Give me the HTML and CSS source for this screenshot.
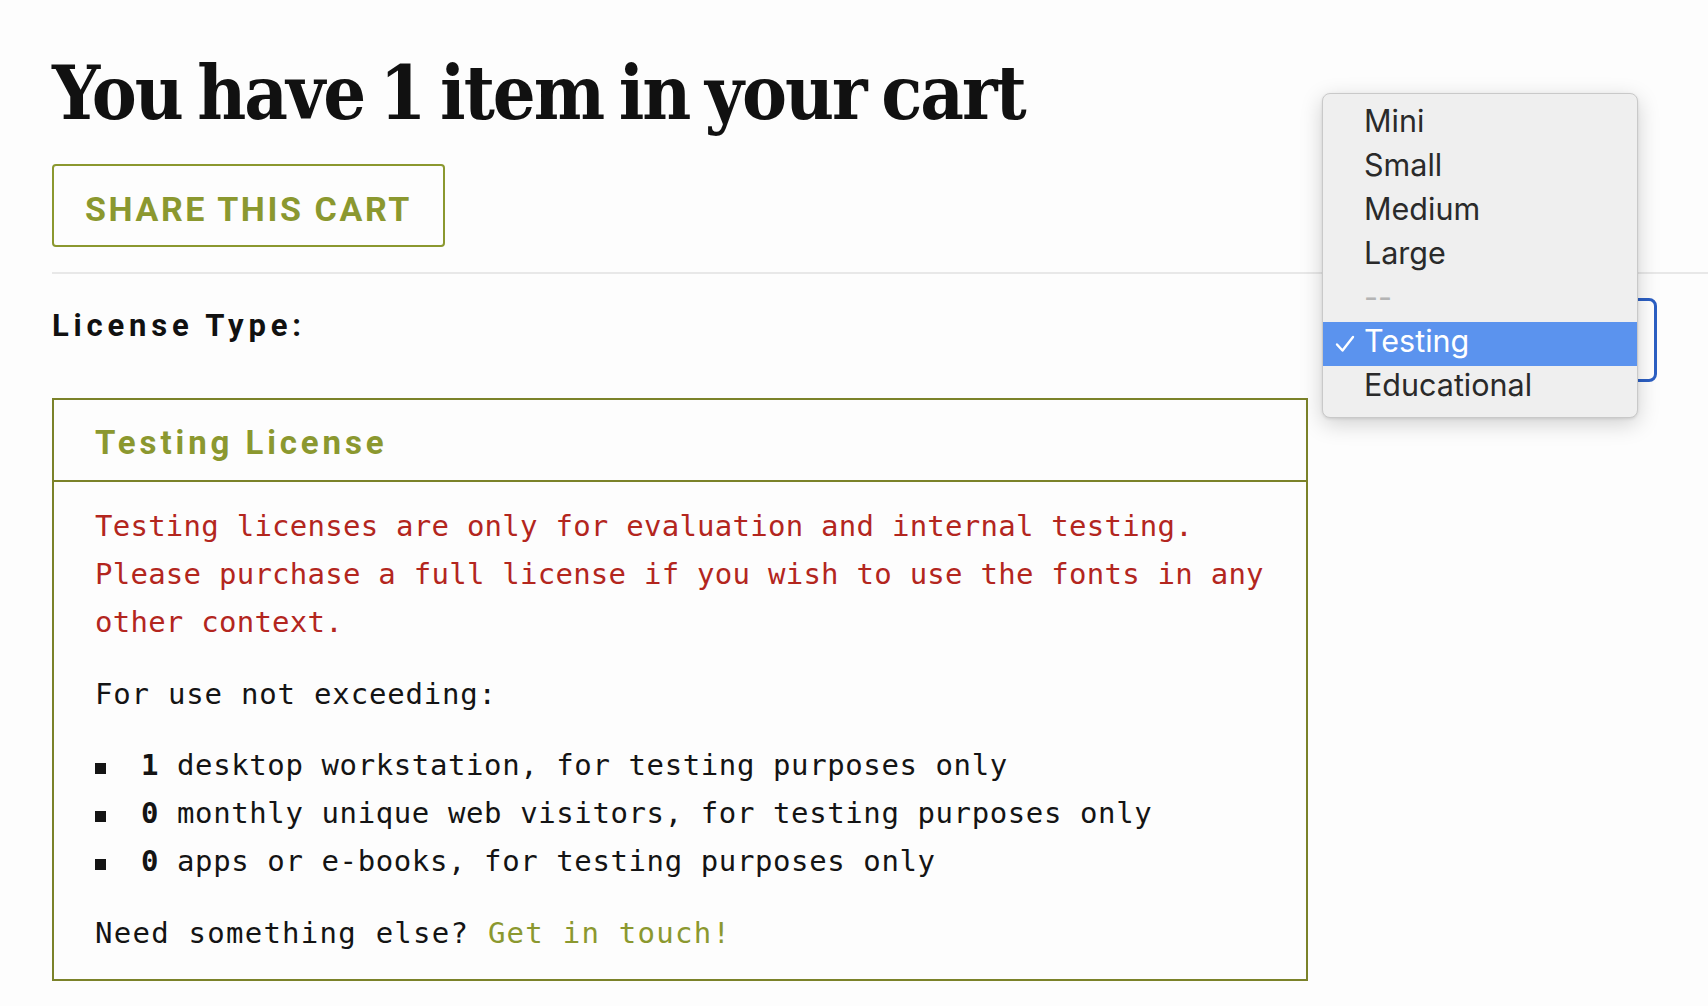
FILE: index.html
```html
<!DOCTYPE html>
<html lang="en">
<head>
<meta charset="utf-8">
<title>Cart</title>
<link rel="stylesheet" href="styles.css">
</head>
<body>
<main class="page">
  <h1 class="title">You have 1 item in your cart</h1>
  <button class="share" type="button">SHARE THIS CART</button>
  <div class="rule"></div>
  <div class="license-row">
    <label class="license-label">License Type:</label>
    <div class="select-box"></div>
  </div>
  <section class="license-card">
    <header class="card-head">Testing License</header>
    <div class="card-body">
      <p class="warning">Testing licenses are only for evaluation and internal testing. Please purchase a full license if you wish to use the fonts in any other context.</p>
      <p class="plain intro">For use not exceeding:</p>
      <ul class="limits">
        <li><b>1</b> desktop workstation, for testing purposes only</li>
        <li><b>0</b> monthly unique web visitors, for testing purposes only</li>
        <li><b>0</b> apps or e-books, for testing purposes only</li>
      </ul>
      <p class="plain outro">Need something else? <a class="touch" href="#">Get in touch!</a></p>
    </div>
  </section>
</main>

<div class="menu">
  <div class="opt">Mini</div>
  <div class="opt">Small</div>
  <div class="opt">Medium</div>
  <div class="opt">Large</div>
  <div class="opt disabled">--</div>
  <div class="opt selected"><svg class="check" width="20" height="18" viewBox="0 0 20 18"><path d="M2 9.5 L7.5 15.5 L18 2" fill="none" stroke="#ffffff" stroke-width="2.4" stroke-linecap="round" stroke-linejoin="round"/></svg>Testing</div>
  <div class="opt">Educational</div>
</div>
</body>
</html>
```

FILE: styles.css
```css
html, body {
  margin: 0;
  padding: 0;
  background: #fdfdfd;
}

.page {
  padding: 56px 51px 0 52px;
}

.title {
  margin: 0;
  font-family: "DejaVu Serif", "Liberation Serif", serif;
  font-stretch: condensed;
  font-weight: 700;
  font-size: 75px;
  line-height: 75px;
  letter-spacing: -2px;
  word-spacing: -6px;
  color: #111111;
}

.share {
  display: flex;
  align-items: center;
  justify-content: center;
  margin-top: 33px;
  width: 393px;
  height: 83px;
  padding: 6px 0 0 0;
  box-sizing: border-box;
  background: transparent;
  border: 2px solid #8b982f;
  border-radius: 4px;
  font-family: Roboto, "Liberation Sans", sans-serif;
  font-weight: 700;
  font-size: 34px;
  letter-spacing: 2.6px;
  color: #8b982f;
}

.rule {
  margin-top: 25px;
  margin-right: -51px;
  height: 2px;
  background: #e8e8e8;
}

.license-row {
  display: flex;
  justify-content: space-between;
  align-items: flex-start;
  margin-top: 24px;
}

.license-label {
  margin-top: 9px;
  font-family: Roboto, "Liberation Sans", sans-serif;
  font-weight: 700;
  font-size: 31px;
  line-height: 1.2;
  letter-spacing: 4.8px;
  color: #111111;
}

.select-box {
  width: 320px;
  height: 84px;
  box-sizing: border-box;
  border: 3px solid #2c5fc3;
  border-radius: 8px;
  background: #ffffff;
}

.license-card {
  margin-top: 16px;
  width: 1256px;
  box-sizing: border-box;
  border: 2px solid #7b8229;
}

.card-head {
  height: 82px;
  box-sizing: border-box;
  padding: 4px 40px 0 41px;
  display: flex;
  align-items: center;
  border-bottom: 2px solid #7b8229;
  font-family: Roboto, "Liberation Sans", sans-serif;
  font-weight: 700;
  font-size: 33px;
  letter-spacing: 3.9px;
  color: #8b982f;
}

.card-body {
  padding: 20px 40px 22px 41px;
  font-family: "DejaVu Sans Mono", "Liberation Mono", monospace;
  font-size: 29px;
  line-height: 48px;
  color: #141414;
}

.card-body p {
  margin: 0;
}

.warning {
  color: #b3261e;
  letter-spacing: 0.25px;
}

.plain {
  margin-top: 24px !important;
}

.intro {
  letter-spacing: 0.8px;
}

.outro {
  letter-spacing: 1.25px;
}

.limits {
  list-style: none;
  margin: 23px 0 0 0;
  padding: 0;
  letter-spacing: 0.6px;
}

.limits li {
  display: flex;
  align-items: baseline;
}

.limits li::before {
  content: "";
  flex: none;
  width: 11px;
  height: 11px;
  margin-right: 35px;
  background: #141414;
  position: relative;
  top: -1px;
}

.limits b {
  font-weight: 700;
  margin-right: 18px;
}

.touch {
  color: #8b982f;
  text-decoration: none;
}

.menu {
  position: absolute;
  top: 93px;
  left: 1322px;
  width: 316px;
  box-sizing: border-box;
  padding: 8px 0 7px 0;
  background: #efefef;
  border: 1px solid #c9c9c9;
  border-radius: 8px;
  box-shadow: 0 6px 22px rgba(0, 0, 0, 0.18), 0 1px 3px rgba(0, 0, 0, 0.1);
  font-family: Inter, "Noto Sans", sans-serif;
  font-size: 30.5px;
  color: #2a2a2a;
}

.opt {
  position: relative;
  height: 44px;
  box-sizing: border-box;
  line-height: 38px;
  padding: 0 0 6px 41px;
}

.opt.disabled {
  color: #b4b4b4;
}

.opt.selected {
  background: #5b93ee;
  color: #ffffff;
}

.check {
  position: absolute;
  left: 12px;
  top: 13px;
}
```
